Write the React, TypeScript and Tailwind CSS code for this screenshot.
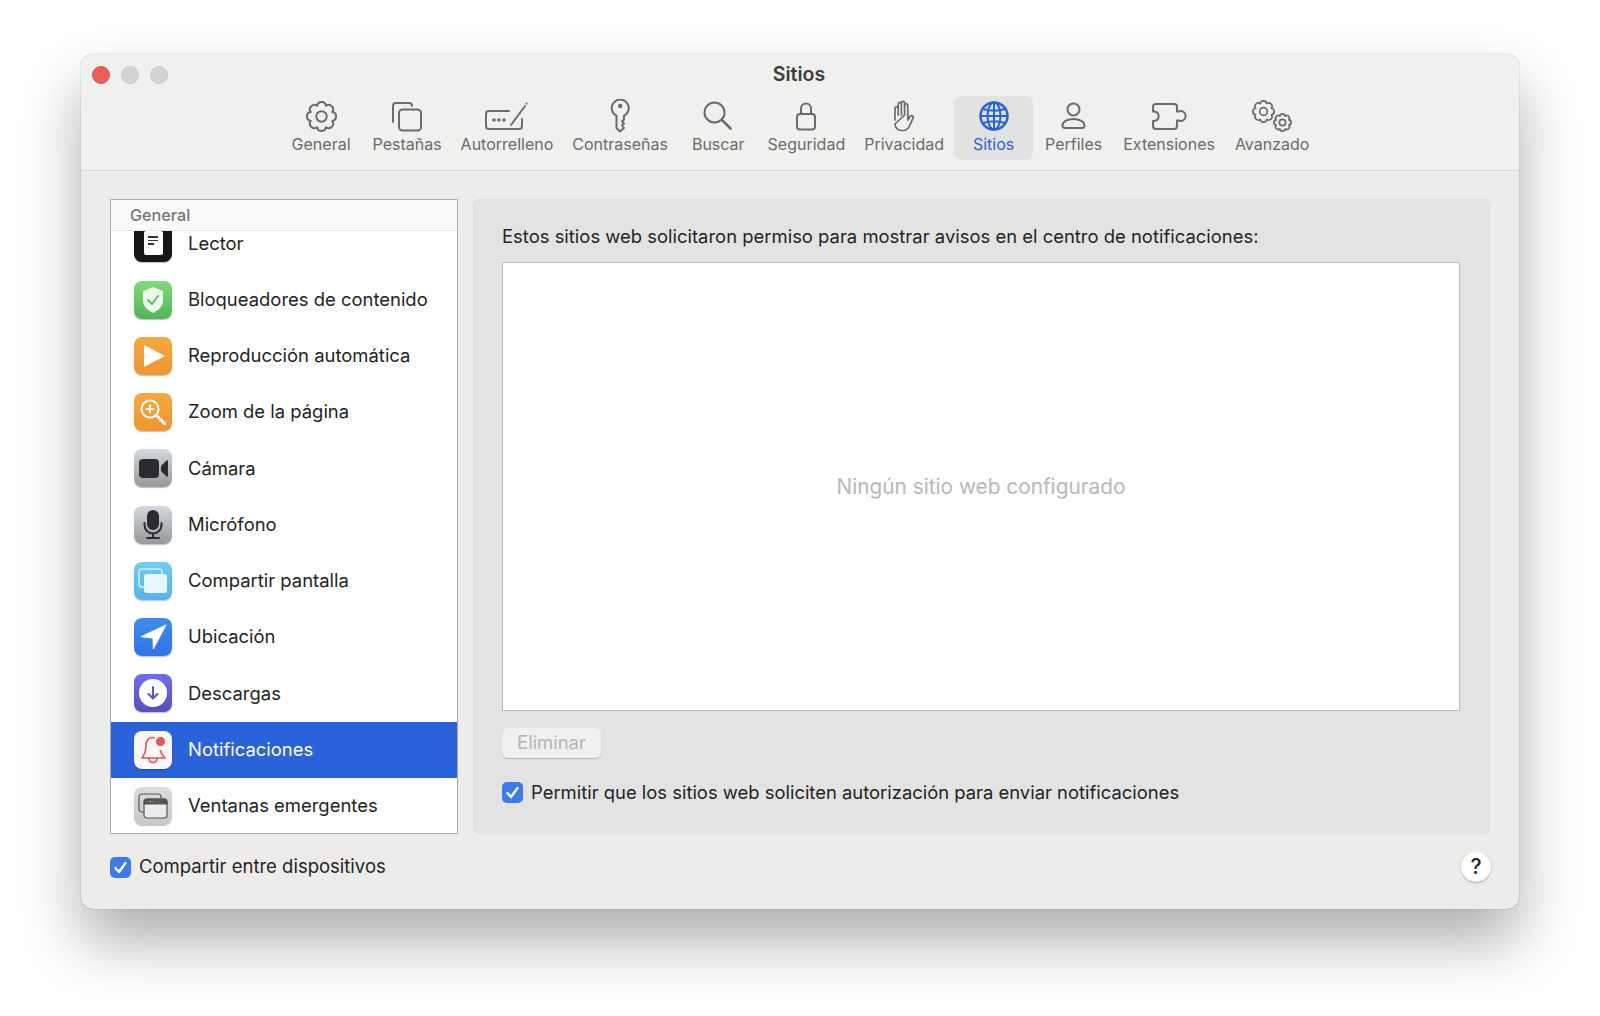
import type { ReactNode } from 'react';

const uiFont = { fontFamily: 'Inter, "Liberation Sans", sans-serif' };

function Glyph({ w, h, children, className = 'text-[#6b6b6b]' }: { w: number; h: number; children: ReactNode; className?: string }) {
  return (
    <svg width={w} height={h} viewBox={`0 0 ${w} ${h}`} fill="none" stroke="currentColor" strokeWidth="2" strokeLinecap="round" strokeLinejoin="round" className={className}>
      {children}
    </svg>
  );
}

// cog with 8 rounded teeth, like the system gear
function Gear({ size, stroke = 2, className = '' }: { size: number; stroke?: number; className?: string }) {
  const c = size / 2;
  const R = c - stroke / 2;
  const r = R * 0.8;
  const at = (rad: number, deg: number) => {
    const a = ((deg - 90) * Math.PI) / 180;
    return `${(c + rad * Math.cos(a)).toFixed(2)} ${(c + rad * Math.sin(a)).toFixed(2)}`;
  };
  let d = `M${at(r, -22.5)}`;
  for (let i = 0; i < 8; i++) {
    const a = i * 45;
    d += `Q${at(R * 1.04, a - 15)} ${at(R, a)}Q${at(R * 1.04, a + 15)} ${at(r, a + 22.5)}`;
  }
  return (
    <svg width={size} height={size} viewBox={`0 0 ${size} ${size}`} fill="none" stroke="currentColor" strokeWidth={stroke} strokeLinejoin="round" className={`text-[#6b6b6b] ${className}`}>
      <path d={`${d}Z`} />
      <circle cx={c} cy={c} r={R * 0.36} />
    </svg>
  );
}

const tabs: { label: string; icon: ReactNode; active?: boolean; nudge?: string }[] = [
  { label: 'General', icon: <Gear size={31} /> },
  {
    label: 'Pestañas',
    nudge: 'ml-[2px]',
    icon: (
      <Glyph w={32} h={31}>
        <path d="M2 21V5a3 3 0 0 1 3-3h13a3 3 0 0 1 3 3" />
        <rect x="8" y="8.500" width="22" height="21" rx="3.500" />
      </Glyph>
    ),
  },
  {
    label: 'Autorrelleno',
    nudge: '-ml-[1px]',
    icon: (
      <Glyph w={43} h={30}>
        <path d="M24 10H4a3 3 0 0 0-3 3v12a3 3 0 0 0 3 3h30a3 3 0 0 0 3-3v-7" />
        <path d="M26 24L40 5" />
        <path d="M41.500 2.500l.1.1" />
        <circle cx="9" cy="19" r="0.800" fill="currentColor" />
        <circle cx="14" cy="19" r="0.800" fill="currentColor" />
        <circle cx="19" cy="19" r="0.800" fill="currentColor" />
      </Glyph>
    ),
  },
  {
    label: 'Contraseñas',
    nudge: '-ml-[1px]',
    icon: (
      <Glyph w={22} h={35}>
        <path d="M7.500 16.700V29l3.500 3.500L15 29l-2-2.500 2-2-2-2 2-2v-3.800A8.500 8.500 0 1 0 7.500 16.700z" />
        <circle cx="11.200" cy="7" r="1.200" fill="currentColor" />
      </Glyph>
    ),
  },
  {
    label: 'Buscar',
    nudge: 'ml-[4px]',
    icon: (
      <Glyph w={30} h={30}>
        <circle cx="11.500" cy="11.500" r="10" />
        <path d="M19 19l8.500 8.500" strokeWidth="2.600" />
      </Glyph>
    ),
  },
  {
    label: 'Seguridad',
    nudge: 'ml-[3px]',
    icon: (
      <Glyph w={22} h={30}>
        <path d="M6 13V7.500a5 5 0 0 1 10 0V13" />
        <rect x="2" y="13" width="18" height="15.500" rx="3" />
      </Glyph>
    ),
  },
  {
    label: 'Privacidad',
    nudge: '-ml-[1px]',
    icon: (
      <Glyph w={24} h={32}>
        <path d="M3 20V8.500a1.600 1.600 0 0 1 3.200 0V15M6.200 15V4a1.600 1.600 0 0 1 3.200 0v11M9.400 15V3a1.600 1.600 0 0 1 3.200 0v12M12.600 15V5.500a1.600 1.600 0 0 1 3.200 0V20l2.400-3.800a1.700 1.700 0 0 1 2.900 1.700L17.500 26a7 7 0 0 1-6 4.500H9.500A6.500 6.500 0 0 1 3 24z" strokeWidth="1.700" />
      </Glyph>
    ),
  },
  {
    label: 'Sitios',
    active: true,
    icon: (
      <Glyph w={30} h={30} className="text-[#2a62d9]">
        <circle cx="15" cy="15" r="13.500" strokeWidth="2.400" />
        <ellipse cx="15" cy="15" rx="6.500" ry="13.500" strokeWidth="2" />
        <path d="M15 1.500v27M1.500 15h27M4 8c6.500 2 15.500 2 22 0M4 22c6.500-2 15.500-2 22 0" strokeWidth="2" />
      </Glyph>
    ),
  },
  {
    label: 'Perfiles',
    nudge: 'ml-[2px]',
    icon: (
      <Glyph w={28} h={30}>
        <circle cx="13.500" cy="8.500" r="6" />
        <path d="M2.500 24.500c0-3.500 4.500-6.500 11-6.500s11 3 11 6.500c0 1.500-1 2.500-2.500 2.500H5c-1.500 0-2.500-1-2.500-2.500z" />
      </Glyph>
    ),
  },
  {
    label: 'Extensiones',
    nudge: 'ml-[1px]',
    icon: (
      <Glyph w={36} h={29}>
        <path d="M2 9.500V5a3 3 0 0 1 3-3h18a3 3 0 0 1 3 3v4.500h1.500a5 5 0 1 1 0 9H26V24a3 3 0 0 1-3 3H5a3 3 0 0 1-3-3v-5h1.500a4.800 4.800 0 0 0 0-9.500z" />
      </Glyph>
    ),
  },
  {
    label: 'Avanzado',
    icon: (
      <span className="flex h-[32px] w-[40px]">
        <Gear size={23} stroke={1.7} />
        <Gear size={19} stroke={1.7} className="-ml-[2px] mt-[13px]" />
      </span>
    ),
  },
];

function Tile({ className, children }: { className: string; children: ReactNode }) {
  return (
    <span className={`flex h-[38px] w-[38px] shrink-0 items-center justify-center rounded-[8px] shadow-[0_1px_1px_rgba(0,0,0,0.25)] ${className}`}>
      {children}
    </span>
  );
}

const rows: { label: string; icon: ReactNode; active?: boolean }[] = [
  {
    label: 'Lector',
    icon: (
      <Tile className="bg-[#161616]">
        <span className="flex h-[24px] w-[19px] flex-col gap-[2px] rounded-[2px] bg-white px-[4px] pt-[5px]">
          <span className="h-[1.5px] w-[10px] bg-[#333]" />
          <span className="h-[1.5px] w-[10px] bg-[#333]" />
          <span className="h-[1.5px] w-[6px] bg-[#333]" />
        </span>
      </Tile>
    ),
  },
  {
    label: 'Bloqueadores de contenido',
    icon: (
      <Tile className="bg-gradient-to-b from-[#7fdc77] to-[#4fb657]">
        <svg width="24" height="28" viewBox="0 0 24 28">
          <path d="M12 1l10 4v9c0 6-4 10-10 13C6 24 2 20 2 14V5z" fill="#eef8ec" />
          <path d="M7 14l4 4 6-8" fill="none" stroke="#5cc063" strokeWidth="2" strokeLinecap="round" strokeLinejoin="round" />
        </svg>
      </Tile>
    ),
  },
  {
    label: 'Reproducción automática',
    icon: (
      <Tile className="bg-gradient-to-b from-[#f5a93e] to-[#ee9530]">
        <svg width="21" height="22" viewBox="0 0 21 22" className="ml-[3px]">
          <path d="M0 0l21 11L0 22z" fill="#fff" />
        </svg>
      </Tile>
    ),
  },
  {
    label: 'Zoom de la página',
    icon: (
      <Tile className="bg-gradient-to-b from-[#f5a93e] to-[#ee9530]">
        <svg width="30" height="30" viewBox="0 0 30 30" fill="none" stroke="#fff" strokeLinecap="round">
          <circle cx="12" cy="12" r="8.500" strokeWidth="2" />
          <path d="M12 8.500v7M8.500 12h7" strokeWidth="1.800" />
          <path d="M19 19l8 8" strokeWidth="2.600" />
        </svg>
      </Tile>
    ),
  },
  {
    label: 'Cámara',
    icon: (
      <Tile className="bg-gradient-to-b from-[#d4dadf] to-[#97999b]">
        <svg width="29" height="19" viewBox="0 0 29 19" fill="#2c2c2e">
          <rect x="0" y="0" width="20" height="19" rx="4" />
          <path d="M22 7l5-5a1 1 0 0 1 2 1v13a1 1 0 0 1-2 1l-5-5z" />
        </svg>
      </Tile>
    ),
  },
  {
    label: 'Micrófono',
    icon: (
      <Tile className="bg-gradient-to-b from-[#d4dadf] to-[#97999b]">
        <svg width="22" height="29" viewBox="0 0 22 29" fill="none" stroke="#2c2c2e" strokeWidth="2" strokeLinecap="round">
          <rect x="6" y="1" width="10" height="18" rx="5" fill="#2c2c2e" />
          <path d="M2.500 13v2a8.500 8.500 0 0 0 17 0v-2M11 24v4M5 28h12" />
        </svg>
      </Tile>
    ),
  },
  {
    label: 'Compartir pantalla',
    icon: (
      <Tile className="bg-gradient-to-b from-[#6fcdf5] to-[#54b3ec]">
        <svg width="30" height="26" viewBox="0 0 30 26">
          <rect x="1" y="1" width="23" height="18" rx="3" fill="none" stroke="#d8f1fc" strokeWidth="1.500" />
          <rect x="6" y="6" width="23" height="19" rx="3" fill="#e9f7fd" />
        </svg>
      </Tile>
    ),
  },
  {
    label: 'Ubicación',
    icon: (
      <Tile className="bg-gradient-to-b from-[#3f8bf5] to-[#2f74ea]">
        <svg width="27" height="26" viewBox="-1 -1 27 26">
          <path d="M25 0L0 11.700 12 13l.3 11z" fill="#fff" stroke="#fff" strokeLinejoin="round" />
        </svg>
      </Tile>
    ),
  },
  {
    label: 'Descargas',
    icon: (
      <Tile className="bg-gradient-to-b from-[#6e6ef0] to-[#5551c0]">
        <span className="flex h-[28px] w-[28px] items-center justify-center rounded-full bg-white">
          <svg width="14" height="16" viewBox="0 0 14 16" fill="none" stroke="#5a56c8" strokeWidth="2" strokeLinecap="round" strokeLinejoin="round">
            <path d="M7 2v11M2.500 9l4.500 4.500L11.500 9" />
          </svg>
        </span>
      </Tile>
    ),
  },
  {
    label: 'Notificaciones',
    active: true,
    icon: (
      <Tile className="bg-[#f8f8f8]">
        <svg width="30" height="32" viewBox="0 0 30 32" fill="none" stroke="#e5574c" strokeWidth="1.600" strokeLinejoin="round">
          <path d="M17 4c-5-2-9 2-9 7 0 6-1 9-4 13h23c-3-3-4-5-5-8" />
          <path d="M11 24c0 6 8 6 8 0" />
          <circle cx="22.500" cy="7.500" r="4.500" fill="#e5574c" stroke="none" />
        </svg>
      </Tile>
    ),
  },
  {
    label: 'Ventanas emergentes',
    icon: (
      <Tile className="bg-gradient-to-b from-[#dcdcde] to-[#c8c8ca]">
        <svg width="30" height="26" viewBox="0 0 30 26" fill="none" stroke="#555" strokeWidth="1.200">
          <rect x="1" y="1" width="22" height="18" rx="3" />
          <rect x="6" y="6" width="23" height="19" rx="3" fill="#ececec" />
          <path d="M6 11V9a3 3 0 0 1 3-3h17a3 3 0 0 1 3 3v2z" fill="#555" />
          <circle cx="9.500" cy="8.500" r="0.800" fill="#e5574c" stroke="none" />
          <circle cx="12.500" cy="8.500" r="0.800" fill="#e8b93e" stroke="none" />
          <circle cx="15.500" cy="8.500" r="0.800" fill="#5cc063" stroke="none" />
        </svg>
      </Tile>
    ),
  },
];

function Checkbox() {
  return (
    <span className="flex h-[21px] w-[21px] shrink-0 items-center justify-center rounded-[5px] bg-[#3a7cf0]">
      <svg width="15" height="15" viewBox="0 0 15 15" fill="none" stroke="#fff" strokeWidth="2.400" strokeLinecap="round" strokeLinejoin="round">
        <path d="M2.500 8l3.500 4 6.500-9" />
      </svg>
    </span>
  );
}

export default function App() {
  return (
    <div className="h-[1016px] w-[1600px] overflow-hidden bg-white pt-[54px] pl-[81px] text-[#242424]" style={uiFont}>
      <div className="flex h-[855px] w-[1438px] flex-col rounded-[12px] bg-[#edecea] shadow-[0_32px_60px_rgba(0,0,0,0.32),0_0_1px_rgba(0,0,0,0.5)]">
        <header className="h-[117px] shrink-0 rounded-t-[12px] border-b border-[#d9d9d7] bg-[#f0f0ef]">
          <div className="flex h-[42px] items-center pl-[11px]">
            <div className="flex gap-[11px]">
              <span className="h-[18px] w-[18px] rounded-full border border-[#d8574e] bg-[#ec5f56]" />
              <span className="h-[18px] w-[18px] rounded-full border border-[#c9c9c7] bg-[#d3d3d1]" />
              <span className="h-[18px] w-[18px] rounded-full border border-[#c9c9c7] bg-[#d3d3d1]" />
            </div>
            <h1 className="flex-1 pr-[89px] text-center text-[19.5px] font-semibold text-[#3c3c3c]">Sitios</h1>
          </div>
          <nav className="flex justify-center pl-[1px]">
            {tabs.map((tab) => (
              <div key={tab.label} className={`flex h-[64px] flex-col items-center justify-between rounded-[8px] px-[10px] pt-[3px] pb-[6px] ${tab.nudge ?? ''} ${tab.active ? 'min-w-[79px] bg-[#e2e2e1] text-[#2a62d9]' : 'text-[#6b6b6b]'}`}>
                <span className="flex h-[34px] items-center">{tab.icon}</span>
                <span className="text-[16px] leading-[20px]">{tab.label}</span>
              </div>
            ))}
          </nav>
        </header>

        <main className="flex min-h-0 flex-1 gap-[15px] px-[29px] pt-[28px]">
          <aside className="flex h-[635px] w-[348px] shrink-0 flex-col border border-[#aaaaaa] bg-white">
            <div className="h-[31px] shrink-0 border-b border-[#e4e4e4] bg-[#fafafa] pl-[19px] text-[16.2px] leading-[30px] font-medium text-[#777]">General</div>
            <div className="flex min-h-0 flex-1 flex-col justify-end overflow-hidden">
              {rows.map((row, i) => (
                <div key={row.label} className={`flex h-[56.25px] shrink-0 items-center gap-[16px] pl-[23px] text-[18.45px] ${row.active ? 'bg-[#2a62d9] text-white' : ''} ${i === rows.length - 1 ? '-mb-[1px]' : ''}`}>
                  {row.icon}
                  <span>{row.label}</span>
                </div>
              ))}
            </div>
          </aside>

          <section className="flex h-[635px] flex-1 flex-col rounded-[6px] border border-[#dfdfdd] bg-[#e3e3e3] pt-[24px] pr-[29px] pl-[28px]">
            <p className="text-[18.44px] leading-[24px]">Estos sitios web solicitaron permiso para mostrar avisos en el centro de notificaciones:</p>
            <div className="mt-[14px] flex h-[449px] items-center justify-center border border-[#b9b9b9] bg-white text-[20.8px] text-[#b8b8b8]">Ningún sitio web configurado</div>
            <button className="mt-[17px] flex h-[30px] w-[99px] items-center justify-center rounded-[6px] bg-[#f0f0f0] text-[18.44px] text-[#b4b4b4] shadow-[0_1px_1px_rgba(0,0,0,0.2)]">Eliminar</button>
            <label className="mt-[21px] flex items-center gap-[8px] text-[18.41px]">
              <Checkbox />
              Permitir que los sitios web soliciten autorización para enviar notificaciones
            </label>
          </section>
        </main>

        <footer className="flex h-[75px] shrink-0 items-center justify-between pr-[28px] pb-[9px] pl-[29px]">
          <label className="flex items-center gap-[8px] text-[18.5px]">
            <Checkbox />
            Compartir entre dispositivos
          </label>
          <button className="flex h-[30px] w-[30px] items-center justify-center rounded-full bg-white text-[21px] font-medium shadow-[0_1px_2px_rgba(0,0,0,0.3)]">?</button>
        </footer>
      </div>
    </div>
  );
}
